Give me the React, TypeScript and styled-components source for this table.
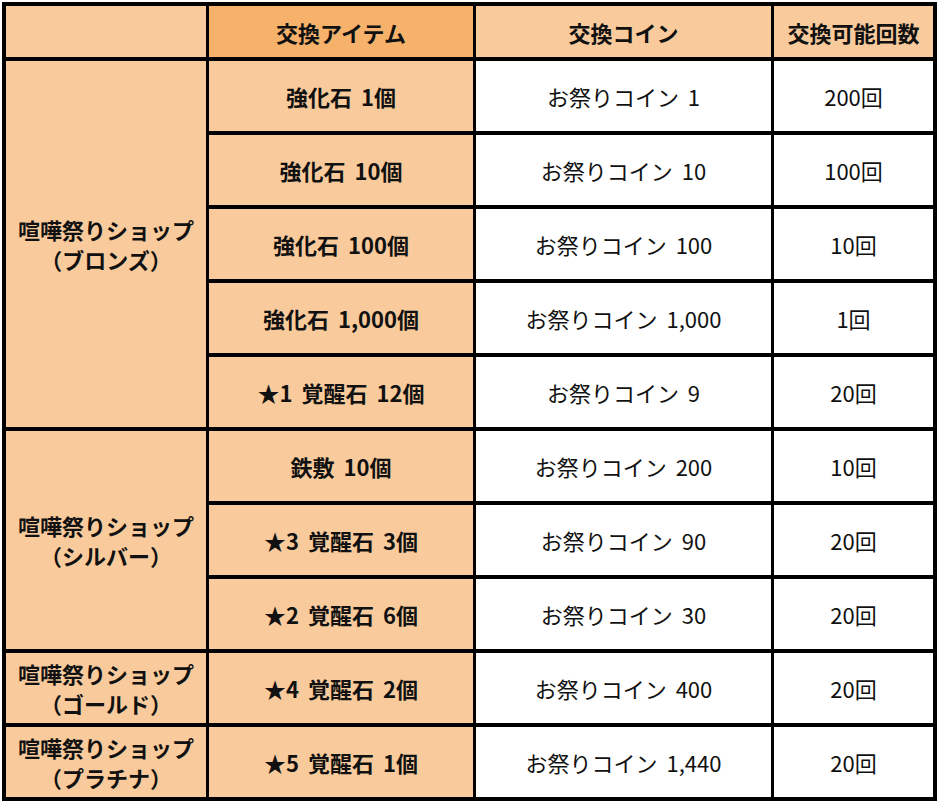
import styled, { createGlobalStyle } from "styled-components";

type Item = {
  name: string;
  coin: string;
  limit: string;
};

type Shop = {
  title: string;
  grade: string;
  items: Item[];
};

const shops: Shop[] = [
  {
    title: "喧嘩祭りショップ",
    grade: "（ブロンズ）",
    items: [
      { name: "強化石 1個", coin: "お祭りコイン 1", limit: "200回" },
      { name: "強化石 10個", coin: "お祭りコイン 10", limit: "100回" },
      { name: "強化石 100個", coin: "お祭りコイン 100", limit: "10回" },
      { name: "強化石 1,000個", coin: "お祭りコイン 1,000", limit: "1回" },
      { name: "★1 覚醒石 12個", coin: "お祭りコイン 9", limit: "20回" },
    ],
  },
  {
    title: "喧嘩祭りショップ",
    grade: "（シルバー）",
    items: [
      { name: "鉄敷 10個", coin: "お祭りコイン 200", limit: "10回" },
      { name: "★3 覚醒石 3個", coin: "お祭りコイン 90", limit: "20回" },
      { name: "★2 覚醒石 6個", coin: "お祭りコイン 30", limit: "20回" },
    ],
  },
  {
    title: "喧嘩祭りショップ",
    grade: "（ゴールド）",
    items: [{ name: "★4 覚醒石 2個", coin: "お祭りコイン 400", limit: "20回" }],
  },
  {
    title: "喧嘩祭りショップ",
    grade: "（プラチナ）",
    items: [{ name: "★5 覚醒石 1個", coin: "お祭りコイン 1,440", limit: "20回" }],
  },
];

const App = () => {
  return (
    <>
      <GlobalStyle />
      <Table>
        <Cell $tone="peach" />
        <Cell $tone="orange" $bold>交換アイテム</Cell>
        <Cell $tone="peach" $bold>交換コイン</Cell>
        <Cell $tone="peach" $bold>交換可能回数</Cell>

        {shops.map((shop, i) => (
          <Group key={i}>
            <ShopCell $tone="peach" $bold $span={shop.items.length}>
              {shop.title}
              <br />
              {shop.grade}
            </ShopCell>
            {shop.items.map((item) => (
              <Group key={item.name}>
                <Cell $tone="peach" $bold>{item.name}</Cell>
                <Cell $tone="white">{item.coin}</Cell>
                <Cell $tone="white">{item.limit}</Cell>
              </Group>
            ))}
          </Group>
        ))}
      </Table>
    </>
  );
};

const GlobalStyle = createGlobalStyle`
  body {
    margin: 2px 0 0 2px;
    background: #ffffff;
    font-family: "Noto Sans CJK JP", "Noto Sans", sans-serif;
    color: #111111;
  }
`;

const Table = styled.div`
  display: grid;
  grid-template-columns: 200px 264px 295px 159px;
  grid-template-rows: 51px repeat(10, 70px);
  gap: 4px 3px;
  padding: 4px;
  width: max-content;
  background: #000000;
`;

const Group = styled.div`
  display: contents;
`;

const tones = {
  peach: "#f9cb9c",
  orange: "#f6b26b",
  white: "#ffffff",
};

const Cell = styled.div<{ $tone: keyof typeof tones; $bold?: boolean }>`
  display: flex;
  align-items: center;
  justify-content: center;
  text-align: center;
  background: ${(p) => tones[p.$tone]};
  font-size: 22px;
  font-weight: ${(p) => (p.$bold ? 700 : 400)};
  word-spacing: 4px;
  white-space: nowrap;
`;

const ShopCell = styled(Cell)<{ $span: number }>`
  grid-row: span ${(p) => p.$span};
  grid-column: 1;
  line-height: 30px;
`;

export default App;
